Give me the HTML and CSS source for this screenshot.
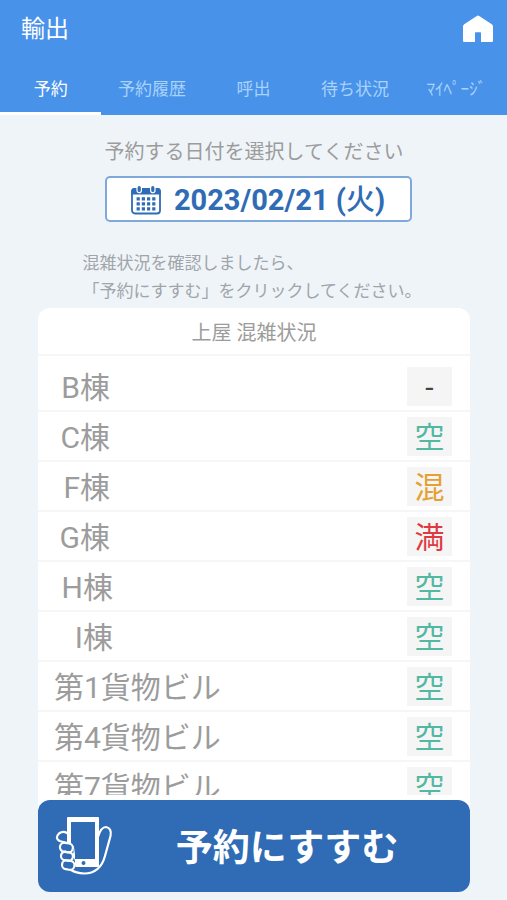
FILE: index.html
```html
<!DOCTYPE html>
<html lang="ja">
<head>
<meta charset="utf-8">
<meta name="viewport" content="width=device-width, initial-scale=1">
<title>輸出</title>
<link rel="stylesheet" href="styles.css">
</head>
<body>
<header class="header">
  <div class="bar">
    <h1 class="title">輸出</h1>
    <a class="home" href="#" aria-label="ホーム">
      <svg width="32" height="28" viewBox="0 0 32 28" aria-hidden="true"><path fill="#fff" d="M14.800 1Q16 .1 17.200 1L29.800 9.300Q31 10.200 31 11.600V26Q31 27 30 27H19V18Q19 17.300 18.300 17.300H13.700Q13 17.300 13 18V27H2Q1 27 1 26V11.600Q1 10.200 2.200 9.300Z"/></svg>
    </a>
  </div>
  <nav class="tabs">
    <a class="tab tab-active" href="#" aria-current="page">予約</a>
    <a class="tab" href="#">予約履歴</a>
    <a class="tab" href="#">呼出</a>
    <a class="tab" href="#">待ち状況</a>
    <a class="tab" href="#">ﾏｲﾍﾟｰｼﾞ</a>
  </nav>
</header>
<main class="main">
  <p class="hint" id="date-hint">予約する日付を選択してください</p>
  <div class="date-row">
    <button class="date" type="button" aria-describedby="date-hint">
      <svg width="30" height="30" viewBox="0 0 30 30" aria-hidden="true">
        <rect x="1" y="4" width="28" height="24.500" rx="3" fill="#fff" stroke="#2f6cb5" stroke-width="1.800"/>
        <path fill="#2f6cb5" d="M.3 9.500V6Q.3 3 3.300 3H26.700Q29.700 3 29.700 6V9.500Z"/>
        <g fill="#2f6cb5" stroke="#fff" stroke-width="1.200"><rect x="6" y=".4" width="4.400" height="7.200" rx="2.200"/><rect x="19.600" y=".4" width="4.400" height="7.200" rx="2.200"/></g>
        <path stroke="#2f6cb5" stroke-width="3.200" stroke-dasharray="3.200 2" d="M5.600 13.800H24.600M5.600 18.800H24.600M5.600 23.800H24.600"/>
      </svg>
      <span>2023/02/21 (<span class="day">火</span>)</span>
    </button>
  </div>
  <p class="note">混雑状況を確認しましたら、<br>「予約にすすむ」をクリックしてください。</p>
  <section class="card">
    <h2 class="card-title" id="status-title">上屋 混雑状況</h2>
    <div class="scroll">
      <table class="status" aria-labelledby="status-title">
        <tbody>
          <tr><th scope="row"><span class="letter">B</span>棟</th><td><span class="badge">-</span></td></tr>
          <tr><th scope="row"><span class="letter">C</span>棟</th><td><span class="badge free">空</span></td></tr>
          <tr><th scope="row"><span class="letter">F</span>棟</th><td><span class="badge busy">混</span></td></tr>
          <tr><th scope="row"><span class="letter">G</span>棟</th><td><span class="badge full">満</span></td></tr>
          <tr><th scope="row"><span class="letter wide">H</span>棟</th><td><span class="badge free">空</span></td></tr>
          <tr><th scope="row"><span class="letter wide">I</span>棟</th><td><span class="badge free">空</span></td></tr>
          <tr><th scope="row">第1貨物ビル</th><td><span class="badge free">空</span></td></tr>
          <tr><th scope="row">第4貨物ビル</th><td><span class="badge free">空</span></td></tr>
          <tr><th scope="row">第7貨物ビル</th><td><span class="badge free">空</span></td></tr>
        </tbody>
      </table>
    </div>
  </section>
  <button class="proceed" type="button">
    <svg width="58" height="60" viewBox="0 0 58 60" fill="none" stroke="#fff" stroke-width="2.200" stroke-linecap="round" stroke-linejoin="round" aria-hidden="true">
      <path d="M43 21C45 14 47 11 51 11Q57 12 55.500 20L50 40C47 51 40 57.500 29 57.500Q21 57 16 54"/>
      <path d="M12 17Q8 14.500 4 17.500Q-.5 22 4.500 25L12 27"/>
      <rect x="5" y="27" width="13" height="9" rx="4.500" transform="rotate(10 11 31)"/>
      <rect x="6" y="36" width="12" height="8.500" rx="4.200" transform="rotate(10 12 40)"/>
      <rect x="7" y="44.500" width="12.500" height="9" rx="4.500" transform="rotate(10 13 49)"/>
      <path fill="#fff" stroke="none" fill-rule="evenodd" d="M13 1H43Q44 1 44 2V50Q44 51 43 51H21Q20 51 20 49V45L18 39L19 32L16 28L12 27V2Q12 1 13 1ZM16 6H40V43H20L20 38L19 31L16 28Z"/>
      <circle cx="28.500" cy="47" r="2" fill="#2f6cb5" stroke="none"/>
    </svg>
    <span class="proceed-text">予約にすすむ</span>
  </button>
</main>
</body>
</html>
```
FILE: styles.css
```css
* {
  box-sizing: border-box;
}

body {
  margin: 0;
  height: 100vh;
  display: flex;
  flex-direction: column;
  background: #eff4f9;
  color: #9c9c9c;
  font-family: Roboto, "Noto Sans CJK JP", sans-serif;
}

h1, h2, p {
  margin: 0;
  font-weight: 400;
}

button {
  font-family: inherit;
  cursor: pointer;
}

.header {
  background: #4892ea;
  color: #fff;
}

.bar {
  display: flex;
  align-items: center;
  justify-content: space-between;
  height: 60px;
  padding: 0 13px 2px 21px;
}

.title {
  font-size: 24px;
  line-height: 32px;
}

.home {
  display: flex;
}

.tabs {
  display: grid;
  grid-template-columns: repeat(5, 1fr);
}

.tab {
  height: 55px;
  border-bottom: 3px solid transparent;
  color: #a9d3fa;
  font-size: 17px;
  line-height: 58px;
  text-align: center;
  text-decoration: none;
  white-space: nowrap;
}

.tab-active {
  border-color: #fff;
  color: #fff;
}

.main {
  flex: 1;
  min-height: 0;
  display: flex;
  flex-direction: column;
  padding: 23px 37px 8px 38px;
}

.hint {
  font-size: 20px;
  line-height: 28px;
  text-align: center;
}

.date-row {
  display: flex;
  justify-content: center;
  margin-top: 10px;
  padding-left: 8px;
}

.date {
  display: flex;
  align-items: center;
  justify-content: center;
  gap: 13px;
  width: 307px;
  height: 46px;
  padding: 2px 0 0;
  border: 2px solid #7fa9da;
  border-radius: 5px;
  background: #fff;
  color: #2f6cb5;
  font-size: 29px;
  font-weight: 700;
  line-height: 40px;
  white-space: nowrap;
}

.day {
  font-weight: 500;
}

.note {
  align-self: center;
  margin: 27px 0 3px;
  padding-right: 4px;
  font-size: 17px;
  line-height: 28px;
  color: #a0a5a9;
}

.card {
  flex: 1;
  min-height: 0;
  display: flex;
  flex-direction: column;
  margin-bottom: -12px;
  padding-bottom: 17px;
  border-radius: 12px 12px 0 0;
  background: #fff;
}

.card-title {
  padding: 10px 0 6px;
  border-bottom: 2px solid #f4f6f7;
  font-size: 20px;
  line-height: 30px;
  text-align: center;
}

.scroll {
  flex: 1;
  min-height: 0;
  padding-top: 6px;
  overflow-y: auto;
  scrollbar-width: none;
}

.status {
  width: 100%;
  border-spacing: 0;
}

.status th,
.status td {
  height: 50px;
  padding: 4px 0;
  border-bottom: 2px solid #f4f6f7;
  vertical-align: middle;
}

.status th {
  padding: 7px 0 3px 16px;
  font-size: 30px;
  font-weight: 400;
  line-height: 38px;
  text-align: left;
}

.status td {
  padding-right: 18px;
}

.letter {
  display: inline-block;
  width: 26px;
  text-align: right;
}

.wide {
  width: 29px;
}

.badge {
  display: block;
  width: 45px;
  height: 39px;
  margin-left: auto;
  background: #f5f5f6;
  color: #444;
  font-size: 30px;
  line-height: 41px;
  text-align: center;
}

.free {
  color: #52b8a2;
}

.busy {
  color: #e5a031;
}

.full {
  color: #df3a40;
}

.proceed {
  position: relative;
  display: flex;
  align-items: center;
  width: 100%;
  height: 92px;
  padding: 0 17px;
  border: 0;
  border-radius: 12px;
  background: #2f6cb5;
  color: #fff;
}

.proceed-text {
  flex: 1;
  padding: 5px 0 0 8px;
  font-size: 37px;
  font-weight: 700;
  line-height: 48px;
}
```
